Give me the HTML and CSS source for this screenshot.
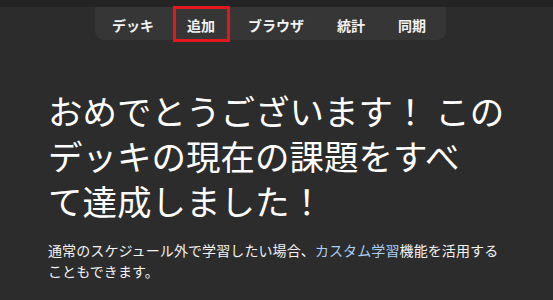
FILE: index.html
```html
<!DOCTYPE html>
<html lang="ja">
<head>
<meta charset="utf-8">
<title>おめでとうございます</title>
<link rel="stylesheet" href="styles.css">
</head>
<body>
<div class="topstrip"></div>
<header class="navwrap">
  <nav class="nav">
    <span class="nav-item">デッキ</span>
    <span class="nav-item active">追加</span>
    <span class="nav-item">ブラウザ</span>
    <span class="nav-item">統計</span>
    <span class="nav-item">同期</span>
  </nav>
</header>
<main class="content">
  <h1 class="title">おめでとうございます！ この<br>デッキの現在の課題をすべ<br>て達成しました！</h1>
  <p class="desc">通常のスケジュール外で学習したい場合、<a class="link" href="#">カスタム学習</a>機能を活用することもできます。</p>
</main>
</body>
</html>
```
FILE: styles.css
```css
html, body {
  margin: 0;
  padding: 0;
  background: #2c2c2c;
  color: #ffffff;
  font-family: "Noto Sans CJK JP", "Noto Sans", sans-serif;
  height: 100%;
  overflow: hidden;
}
.topstrip {
  height: 7px;
  background: #242424;
}
.navwrap {
  display: flex;
  justify-content: flex-start;
  padding-left: 95px;
}
.nav {
  display: flex;
  align-items: center;
  gap: 33px;
  height: 33px;
  padding: 0 20px 0 17px;
  background: #363636;
  border-radius: 0 0 9px 9px;
}
.nav-item {
  position: relative;
  display: block;
  font-size: 14px;
  font-weight: 700;
  color: #f2f2f2;
  line-height: 18px;
  margin-top: 2px;
}
.nav-item.active::after {
  content: "";
  position: absolute;
  left: -14px;
  right: -15px;
  top: -10px;
  height: 36px;
  box-sizing: border-box;
  border: 3px solid #e2181c;
}
.content {
  padding: 0 30px 0 48px;
}
.title {
  margin: 48px 0 0;
  font-size: 34.5px;
  font-weight: 400;
  line-height: 45px;
  color: #ffffff;
}
.desc {
  margin: 17px 0 0;
  font-size: 14px;
  letter-spacing: 0.1px;
  line-height: 21px;
  color: #f2f2f2;
  max-width: 460px;
}
.link {
  color: #a9cdf5;
  text-decoration: none;
}
```
